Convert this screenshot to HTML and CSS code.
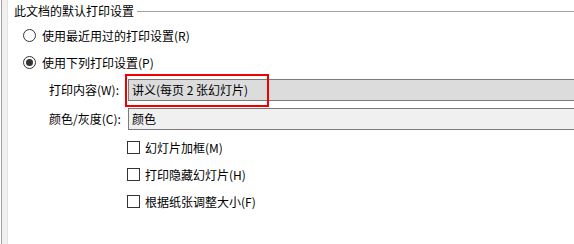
FILE: index.html
```html
<!DOCTYPE html>
<html lang="zh-CN">
<head>
<meta charset="utf-8">
<title>打印设置</title>
<link rel="stylesheet" href="styles.css">
</head>
<body>
<div class="window">
  <div class="edge"></div>
  <div class="group">
    <div class="legend"><span class="legend-text">此文档的默认打印设置</span><span class="rule"></span></div>
    <div class="option"><span class="radio"></span><span>使用最近用过的打印设置(R)</span></div>
    <div class="option"><span class="radio on"></span><span>使用下列打印设置(P)</span></div>
    <div class="field first">
      <span class="label">打印内容(W):</span>
      <div class="combo active"><span>讲义(每页 2 张幻灯片)</span><span class="highlight"></span></div>
    </div>
    <div class="field second">
      <span class="label">颜色/灰度(C):</span>
      <div class="combo"><span>颜色</span></div>
    </div>
    <div class="checks">
      <div class="check-row"><span class="checkbox"></span><span>幻灯片加框(M)</span></div>
      <div class="check-row"><span class="checkbox"></span><span>打印隐藏幻灯片(H)</span></div>
      <div class="check-row"><span class="checkbox"></span><span>根据纸张调整大小(F)</span></div>
    </div>
  </div>
</div>
</body>
</html>
```
FILE: styles.css
```css
html, body {
  margin: 0;
  padding: 0;
  background: #ffffff;
}
body {
  font-family: "Noto Sans CJK SC", "Microsoft YaHei", sans-serif;
  font-size: 12px;
  line-height: 16px;
  color: #000000;
  width: 574px;
  height: 244px;
  overflow: hidden;
}
.window {
  display: flex;
  height: 244px;
}
.edge {
  margin-left: 1px;
  width: 5px;
  background: #f0f0f0;
  border-left: 1px solid #a0a0a0;
  border-right: 1px solid #e3e3e3;
}
.group {
  flex: 1;
  min-width: 0;
}
.legend {
  display: flex;
  align-items: center;
  height: 22px;
  padding-left: 6px;
}
.legend-text {
  white-space: nowrap;
}
.rule {
  flex: 1;
  height: 1px;
  background: #a0a0a0;
  margin-left: 3px;
}
.option {
  display: flex;
  align-items: center;
  height: 27px;
  padding-left: 15px;
  gap: 6px;
}
.radio {
  width: 13px;
  height: 13px;
  box-sizing: border-box;
  border: 1px solid #333333;
  border-radius: 50%;
  display: flex;
  align-items: center;
  justify-content: center;
  flex: none;
}
.radio.on::after {
  content: "";
  width: 7px;
  height: 7px;
  border-radius: 50%;
  background: #333333;
}
.field {
  display: flex;
  align-items: center;
  height: 22px;
  padding-left: 41px;
}
.field.first {
  margin-top: 3px;
}
.field.second {
  margin-top: 7px;
}
.label {
  width: 79px;
  flex: none;
  white-space: nowrap;
}
.combo {
  flex: 1;
  position: relative;
  height: 22px;
  box-sizing: border-box;
  border: 1px solid #7a7a7a;
  border-right: none;
  padding-left: 3px;
  display: flex;
  align-items: center;
  background: #f0f0f0;
}
.combo.active {
  background: #dcdcdc;
}
.highlight {
  position: absolute;
  left: -4px;
  top: -6px;
  width: 144px;
  height: 33px;
  box-sizing: border-box;
  border: 2px solid #f00000;
}
.checks {
  margin-top: 4px;
}
.check-row {
  display: flex;
  align-items: center;
  height: 27px;
  padding-left: 119px;
  gap: 5px;
}
.checkbox {
  width: 13px;
  height: 13px;
  box-sizing: border-box;
  border: 1px solid #333333;
  flex: none;
}
```
